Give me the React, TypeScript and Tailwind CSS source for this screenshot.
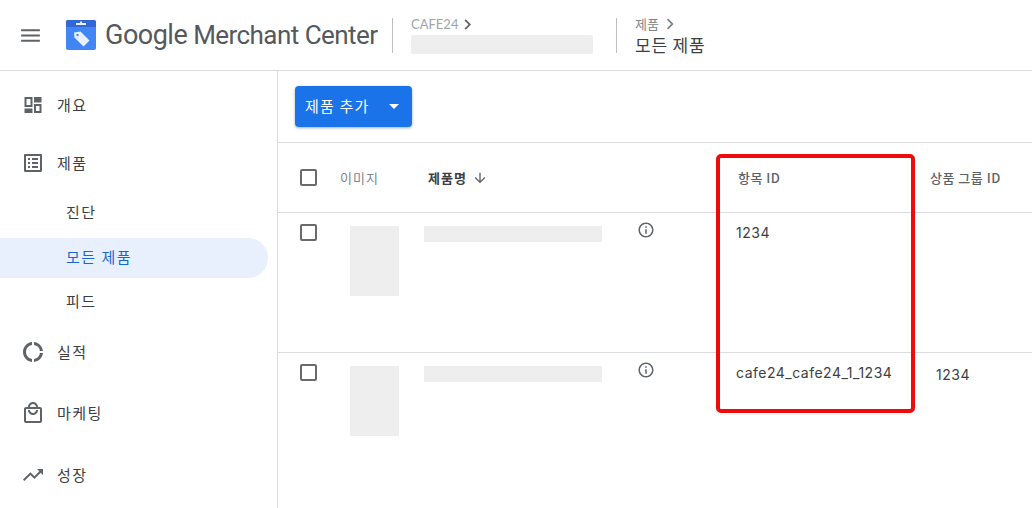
import React from 'react';
import { MdArrowDownward, MdChevronRight, MdInfoOutline, MdMenu, MdOutlineDonutLarge, MdOutlineListAlt, MdOutlineLocalMall, MdTrendingUp } from 'react-icons/md';

const korean = { fontFamily: '"Noto Sans CJK KR", "Noto Sans", sans-serif' };

const Logo = () => (
  <svg width="30" height="30" viewBox="0 0 30 30" className="shrink-0">
    <rect width="30" height="30" rx="2" fill="#4285f4" />
    <path d="M0 2a2 2 0 0 1 2-2h26a2 2 0 0 1 2 2v5H0z" fill="#3367d6" />
    <rect x="10" y="3" width="10" height="2" fill="#e8f0fe" />
    <rect x="14" y="1.5" width="2" height="2" fill="#e8f0fe" />
    <path d="M8 12.5l6.5-1 9 9-6 6-9-9z" fill="#e8f0fe" />
    <circle cx="11.5" cy="15" r="1.2" fill="#4285f4" />
  </svg>
);

const DashboardIcon = () => (
  <svg viewBox="0 0 24 24" className="w-6 h-6 shrink-0" fill="#5f6368">
    <path d="M3.5 4h8v10h-8zM5.5 6v6h4V6z" fillRule="evenodd" />
    <rect x="13" y="4" width="7.5" height="5.5" />
    <rect x="3.5" y="15.5" width="8" height="4.5" />
    <path d="M13 11h7.5v9H13zM15 13v5h3.5v-5z" fillRule="evenodd" />
  </svg>
);

const Checkbox = () => <div className="w-[17px] h-[17px] rounded-[2px] border-2 border-[#6a6a6a] bg-white" />;

const navIcon = 'w-6 h-6 text-[#5f6368] shrink-0';

const NavItem = ({ icon, label, height }: { icon: React.ReactNode; label: string; height: string }) => (
  <div className={`flex items-center pl-[21px] gap-[12px] text-[15px] tracking-[1.5px] text-[#3c4043] ${height}`}>
    {icon}
    <span>{label}</span>
  </div>
);

const SubItem = ({ label, height, active }: { label: string; height: string; active?: boolean }) => (
  <div className={`flex items-center pl-[66px] text-[15px] tracking-[1.5px] ${height} ${active ? 'w-[268px] pb-[2px] rounded-r-full bg-[#e8f0fe] text-[#1967d2]' : 'text-[#3c4043]'}`}>{label}</div>
);

const Row = ({ itemId, groupId }: { itemId: string; groupId?: string }) => (
  <div className="flex h-[140px] border-b border-[#dadce0] last:border-b-0 text-[14px] text-[#3c4043]">
    <div className="w-[72px] pl-[22px] pt-[11px]">
      <Checkbox />
    </div>
    <div className="w-[74px] pt-[13px]">
      <div className="w-[49px] h-[70px] bg-[#eeeeee]" />
    </div>
    <div className="w-[213px] pt-[13px]">
      <div className="w-[178px] h-[16px] bg-[#eeeeee]" />
    </div>
    <div className="w-[99px] pt-[8px]">
      <MdInfoOutline className="w-[18px] h-[18px] text-[#5f6368]" />
    </div>
    <div className="w-[200px] pt-[9px] tracking-[0.5px]" style={{ fontFamily: 'Inter, sans-serif' }}>{itemId}</div>
    {groupId && <div className="pt-[11px] tracking-[0.5px]" style={{ fontFamily: 'Inter, sans-serif' }}>{groupId}</div>}
  </div>
);

const App = () => {
  return (
    <div className="relative w-[1032px] h-[508px] overflow-hidden bg-white" style={korean}>
      <header className="flex items-center h-[71px] border-b border-[#dadce0]">
        <MdMenu className="ml-[18px] w-[25px] h-[25px] text-[#5f6368] shrink-0" />
        <div className="ml-[23px]">
          <Logo />
        </div>
        <div className="ml-[9px] w-[278px] text-[26px] tracking-[-0.55px] text-[#55585c] whitespace-nowrap" style={{ fontFamily: 'Roboto, sans-serif' }}>
          <span className="text-[27px] tracking-[-0.5px]">Google</span> Merchant Center
        </div>
        <div className="ml-[9px] w-px h-[35px] bg-[#bdc1c6]" />
        <div className="ml-[18px] w-[205px]">
          <div className="flex items-center h-[16px] text-[13px] text-[#a0a4a8]" style={{ fontFamily: 'Lato, sans-serif' }}>
            CAFE24
            <MdChevronRight className="w-[21px] h-[21px] -ml-[1px] text-[#5f6368]" />
          </div>
          <div className="mt-[2px] w-[182px] h-[19px] rounded-[2px] bg-[#eeeeee]" />
        </div>
        <div className="w-px h-[35px] bg-[#bdc1c6]" />
        <div className="ml-[18px]">
          <div className="flex items-center h-[18px] text-[13px] text-[#80868b]">
            제품
            <MdChevronRight className="w-[22px] h-[22px] text-[#80868b]" />
          </div>
          <div className="mt-[1px] text-[17px] leading-[22px] tracking-[0.8px] text-[#3c4043]">모든 제품</div>
        </div>
      </header>
      <div className="flex h-[437px]">
        <aside className="w-[278px] shrink-0 border-r border-[#dadce0]">
          <NavItem icon={<DashboardIcon />} label="개요" height="h-[68px]" />
          <NavItem icon={<MdOutlineListAlt className={navIcon} />} label="제품" height="h-[48px]" />
          <SubItem label="진단" height="h-[51px]" />
          <SubItem label="모든 제품" height="h-[40px]" active />
          <SubItem label="피드" height="h-[46px]" />
          <NavItem icon={<MdOutlineDonutLarge className={navIcon} />} label="실적" height="h-[56px]" />
          <NavItem icon={<MdOutlineLocalMall className={navIcon} />} label="마케팅" height="h-[66px]" />
          <NavItem icon={<MdTrendingUp className={navIcon} />} label="성장" height="h-[58px]" />
        </aside>
        <main className="flex-1 min-w-0">
          <div className="h-[72px] border-b border-[#dadce0] pl-[17px] pt-[15px]">
            <button className="flex items-center w-[117px] h-[41px] pl-[10px] rounded-[4px] bg-[#1a73e8] text-white text-[15px] tracking-[1.2px] shadow-[0_1px_3px_rgba(60,64,67,0.45)]">
              제품 추가
              <span className="ml-[19px] w-0 h-0 border-x-[5.5px] border-x-transparent border-t-[5.5px] border-t-white" />
            </button>
          </div>
          <div className="flex items-center h-[70px] border-b border-[#dadce0] text-[13px] text-[#5f6368]">
            <div className="w-[62px] pl-[22px]">
              <Checkbox />
            </div>
            <div className="w-[88px] tracking-[1px] text-[#80868b]">이미지</div>
            <div className="flex items-center w-[310px] font-bold tracking-[1px] text-[#3c4043]">
              제품명
              <MdArrowDownward className="ml-[5px] w-[16px] h-[16px] text-[#5f6368]" />
            </div>
            <div className="w-[192px] font-medium tracking-[0.5px]">항목 ID</div>
            <div className="font-medium tracking-[0.5px] whitespace-nowrap">상품 그룹 ID</div>
          </div>
          <Row itemId="1234" />
          <Row itemId="cafe24_cafe24_1_1234" groupId="1234" />
        </main>
      </div>
      <div className="absolute left-[716px] top-[154px] w-[199px] h-[259px] rounded-[5px] border-4 border-[#f00a0a]" />
    </div>
  );
};

export default App;
